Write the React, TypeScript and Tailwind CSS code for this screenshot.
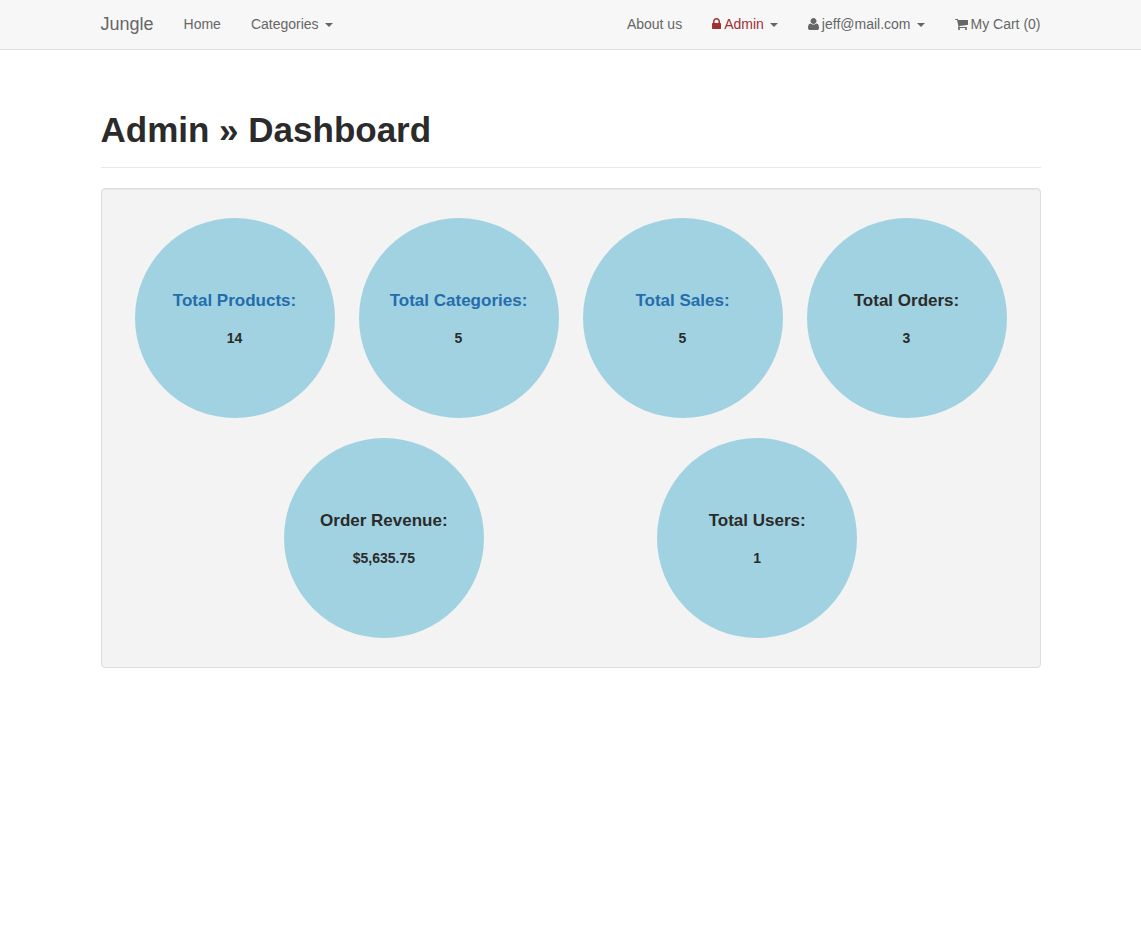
import type { ReactNode } from "react";

function Caret() {
  return (
    <span
      aria-hidden="true"
      className="ml-1.5 inline-block border-x-4 border-t-4 border-x-transparent border-t-[#666] align-middle"
    />
  );
}

function LockIcon() {
  return (
    <svg
      aria-hidden="true"
      viewBox="0 0 1152 1792"
      className="mr-[3px] inline-block h-[14px] w-[9px] fill-current align-[-2px]"
    >
      <path d="M320 768h512V576q0-106-75-181t-181-75-181 75-75 181v192zm832 96v576q0 40-28 68t-68 28H96q-40 0-68-28t-28-68V864q0-40 28-68t68-28h32V576q0-184 132-316t316-132 316 132 132 316v192h32q40 0 68 28t28 68z" />
    </svg>
  );
}

function UserIcon() {
  return (
    <svg
      aria-hidden="true"
      viewBox="192 0 1408 1792"
      className="mr-[3px] inline-block h-[14px] w-[11px] fill-current align-[-2px]"
    >
      <path d="M1600 1405q0 120-73 189.5t-194 69.5h-874q-121 0-194-69.5t-73-189.5q0-53 3.5-103.5t14-109 26.5-108.5 43-97.5 62-81 85.5-53.5 111.5-20q9 0 42 21.5t74.5 48 108 48 133.5 21.5 133.5-21.5 108-48 74.5-48 42-21.5q61 0 111.5 20t85.5 53.5 62 81 43 97.5 26.5 108.5 14 109 3.5 103.5zm-320-893q0 159-112.5 271.5t-271.5 112.5-271.5-112.5-112.5-271.5 112.5-271.5 271.5-112.5 271.5 112.5 112.5 271.5z" />
    </svg>
  );
}

function CartIcon() {
  return (
    <svg
      aria-hidden="true"
      viewBox="64 0 1664 1792"
      className="mr-[3px] inline-block h-[14px] w-[13px] fill-current align-[-2px]"
    >
      <path d="M704 1536q0 52-38 90t-90 38-90-38-38-90 38-90 90-38 90 38 38 90zm896 0q0 52-38 90t-90 38-90-38-38-90 38-90 90-38 90 38 38 90zm128-1088v512q0 24-16.5 42.5t-40.5 21.5l-1044 122q13 60 13 70 0 16-24 64h920q26 0 45 19t19 45-19 45-45 19h-1024q-26 0-45-19t-19-45q0-11 8-31.5t16-36 21.5-40 15.5-29.5l-177-823h-204q-26 0-45-19t-19-45 19-45 45-19h256q16 0 28.5 6.5t19.5 15.5 13 24.5 8 26 5.5 29.5 4.5 26h1201q26 0 45 19t19 45z" />
    </svg>
  );
}

function NavLink({ children }: { children: ReactNode }) {
  return (
    <a href="#" className="px-[15px] pt-[14px] pb-[15px] text-sm leading-5 text-[#666]">
      {children}
    </a>
  );
}

function NavMenu({ children, color = "text-[#666]" }: { children: ReactNode; color?: string }) {
  return (
    <button type="button" className={`px-[15px] pt-[14px] pb-[15px] text-sm leading-5 ${color}`}>
      {children}
      <Caret />
    </button>
  );
}

interface Stat {
  label: string;
  value: string;
  href?: string;
}

const stats: Stat[] = [
  { label: "Total Products:", value: "14", href: "#products" },
  { label: "Total Categories:", value: "5", href: "#categories" },
  { label: "Total Sales:", value: "5", href: "#sales" },
  { label: "Total Orders:", value: "3" },
  { label: "Order Revenue:", value: "$5,635.75" },
  { label: "Total Users:", value: "1" },
];

function StatCircle({ label, value, href }: Stat) {
  return (
    <div className="m-2.5 flex size-[200px] flex-col items-center justify-center gap-[17px] rounded-full bg-[#a1d2e1] pt-[3px] font-bold">
      <h4 className="text-[17px] leading-5">
        {href ? (
          <a href={href} className="text-[#246dad]">
            {label}
          </a>
        ) : (
          label
        )}
      </h4>
      <p className="text-sm leading-5">{value}</p>
    </div>
  );
}

export default function App() {
  return (
    <div className="min-h-screen bg-white font-['Liberation_Sans',Arial,sans-serif] text-sm text-[#2b2b2b]">
      <nav className="border-b border-[#e0e0e0] bg-[#f7f7f7]">
        <div className="mx-auto flex max-w-[970px] flex-wrap items-center justify-between">
          <div className="flex items-center">
            <a href="#" className="px-[15px] pt-[14px] pb-[15px] text-lg leading-5 text-[#666]">
              Jungle
            </a>
            <NavLink>Home</NavLink>
            <NavMenu>Categories</NavMenu>
          </div>
          <div className="flex items-center">
            <NavLink>About us</NavLink>
            <NavMenu color="text-[#9e3034]">
              <LockIcon />
              Admin
            </NavMenu>
            <NavMenu>
              <UserIcon />
              jeff@mail.com
            </NavMenu>
            <NavLink>
              <CartIcon />
              My Cart (0)
            </NavLink>
          </div>
        </div>
      </nav>
      <main className="mx-auto max-w-[970px] px-[15px] pt-[60px]">
        <header className="mb-5 border-b border-[#e8e8e8] pb-[17px]">
          <h1 className="text-[35px] leading-10 font-bold">Admin » Dashboard</h1>
        </header>
        <section className="flex flex-wrap justify-evenly rounded border border-[#ddd] bg-[#f3f3f3] p-[19px] shadow-[inset_0_1px_1px_rgba(0,0,0,0.05)]">
          {stats.map((stat) => (
            <StatCircle key={stat.label} {...stat} />
          ))}
        </section>
      </main>
    </div>
  );
}
